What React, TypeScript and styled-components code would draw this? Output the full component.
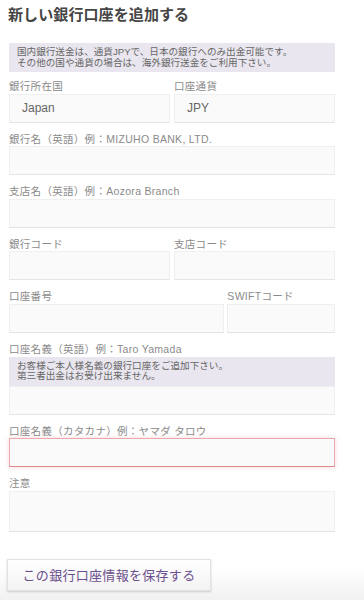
import React from "react";
import styled, { createGlobalStyle, css } from "styled-components";

const Global = createGlobalStyle`
  html, body { margin: 0; padding: 0; background: #fff; }
  * { box-sizing: border-box; }
  body { font-family: "Liberation Sans", "Noto Sans CJK JP", sans-serif; }
`;

const Page = styled.div`
  min-height: 600px;
  padding: 5px 29px 0 9px;
  background: linear-gradient(to bottom, #ffffff 0, #ffffff 568px, #f1f1f1 600px);
  display: flex;
  flex-direction: column;
`;

const Title = styled.h1`
  margin: 0 0 0 -1px;
  font-size: 15px;
  line-height: 20px;
  font-weight: 700;
  color: #454545;
  letter-spacing: 0.1px;
`;

const Notice = styled.div<{ $top?: number }>`
  margin-top: ${(p) => p.$top ?? 0}px;
  background: #e9e6ef;
  padding: 4px 8px 3px;
  font-size: 9.6px;
  line-height: 10.8px;
  color: #666;
  height: 29px;
  white-space: nowrap;
`;

const Row = styled.div<{ $cols?: string; $top?: number }>`
  display: grid;
  grid-template-columns: ${(p) => p.$cols ?? "1fr"};
  column-gap: ${(p) => (p.$cols === "2fr 1fr" ? 3 : 4)}px;
  margin-top: ${(p) => p.$top ?? 10}px;
`;

const Field = styled.div`
  display: flex;
  flex-direction: column;
  min-width: 0;
`;

const Label = styled.label`
  font-size: 10.5px;
  line-height: 13.6px;
  letter-spacing: 0.3px;
  color: #8a8a8a;
  white-space: nowrap;
`;

const inputBase = css<{ $error?: boolean }>`
  width: 100%;
  border: 1px solid #efefef;
  border-bottom-color: #e4e4e4;
  background: #fafafa;
  padding: 0 12px;
  font-family: "Liberation Sans", "Noto Sans CJK JP", sans-serif;
  font-size: 12px;
  color: #666;
  outline: none;
  ${(p) =>
    p.$error &&
    css`
      border-color: #eaa9ac;
      border-bottom-color: #dc8a8f;
      box-shadow: 0 0 4px rgba(232, 130, 135, 0.35);
    `}
`;

const Input = styled.input<{ $error?: boolean }>`
  ${inputBase};
  height: 29px;
`;

const TextArea = styled.textarea`
  ${inputBase};
  height: 41px;
  resize: none;
  display: block;
`;

const SaveButton = styled.button`
  margin: 27px 0 0 -2px;
  align-self: flex-start;
  width: 204px;
  height: 32px;
  border: 1px solid #e2e2e2;
  background: linear-gradient(to bottom, #ffffff, #f3f3f3);
  box-shadow: 0 1px 2px rgba(0, 0, 0, 0.18);
  font-family: "Liberation Sans", "Noto Sans CJK JP", sans-serif;
  font-size: 13px;
  letter-spacing: 0.3px;
  color: #6b4f8e;
  padding: 0;
`;

export default function App() {
  return (
    <>
      <Global />
      <Page>
        <Title>新しい銀行口座を追加する</Title>
        <Notice $top={18}>
          国内銀行送金は、通貨JPYで、日本の銀行へのみ出金可能です。
          <br />
          その他の国や通貨の場合は、海外銀行送金をご利用下さい。
        </Notice>

        <Row $cols="1fr 1fr" $top={8}>
          <Field>
            <Label>銀行所在国</Label>
            <Input defaultValue="Japan" readOnly />
          </Field>
          <Field>
            <Label>口座通貨</Label>
            <Input defaultValue="JPY" readOnly />
          </Field>
        </Row>

        <Row>
          <Field>
            <Label>銀行名（英語）例：MIZUHO BANK, LTD.</Label>
            <Input />
          </Field>
        </Row>

        <Row>
          <Field>
            <Label>支店名（英語）例：Aozora Branch</Label>
            <Input />
          </Field>
        </Row>

        <Row $cols="1fr 1fr">
          <Field>
            <Label>銀行コード</Label>
            <Input />
          </Field>
          <Field>
            <Label>支店コード</Label>
            <Input />
          </Field>
        </Row>

        <Row $cols="2fr 1fr">
          <Field>
            <Label>口座番号</Label>
            <Input />
          </Field>
          <Field>
            <Label>SWIFTコード</Label>
            <Input />
          </Field>
        </Row>

        <Row>
          <Field>
            <Label>口座名義（英語）例：Taro Yamada</Label>
            <Notice>
              お客様ご本人様名義の銀行口座をご追加下さい。
              <br />
              第三者出金はお受け出来ません。
            </Notice>
            <Input />
          </Field>
        </Row>

        <Row>
          <Field>
            <Label>口座名義（カタカナ）例：ヤマダ タロウ</Label>
            <Input $error />
          </Field>
        </Row>

        <Row>
          <Field>
            <Label>注意</Label>
            <TextArea />
          </Field>
        </Row>

        <SaveButton>この銀行口座情報を保存する</SaveButton>
      </Page>
    </>
  );
}
